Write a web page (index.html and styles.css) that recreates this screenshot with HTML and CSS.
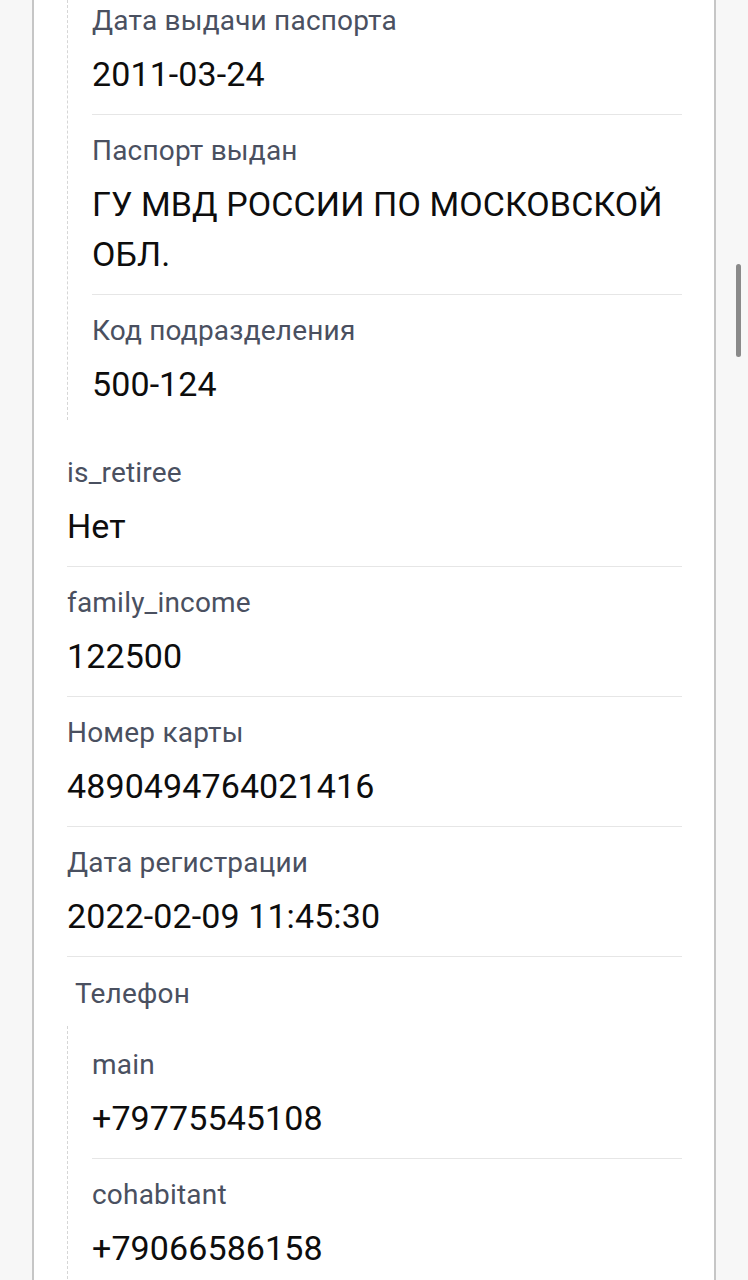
FILE: index.html
```html
<!DOCTYPE html>
<html lang="ru">
<head>
  <meta charset="UTF-8" />
  <meta name="viewport" content="width=device-width, initial-scale=1.0" />
  <title>Клиент</title>
  <link rel="stylesheet" href="styles.css">
</head>
<body>
  <div class="card">
    <!-- Паспорт -->
    <div class="group group-top">
      <div class="row">
        <div class="label">Дата выдачи паспорта</div>
        <div class="value">2011-03-24</div>
      </div>
      <div class="row">
        <div class="label">Паспорт выдан</div>
        <div class="value">ГУ МВД РОССИИ ПО МОСКОВСКОЙ ОБЛ.</div>
      </div>
      <div class="row">
        <div class="label">Код подразделения</div>
        <div class="value">500-124</div>
      </div>
    </div>

    <div class="row">
      <div class="label">is_retiree</div>
      <div class="value">Нет</div>
    </div>
    <div class="row">
      <div class="label">family_income</div>
      <div class="value">122500</div>
    </div>
    <div class="row">
      <div class="label">Номер карты</div>
      <div class="value">4890494764021416</div>
    </div>
    <div class="row">
      <div class="label">Дата регистрации</div>
      <div class="value">2022-02-09 11:45:30</div>
    </div>

    <!-- Телефон -->
    <div class="group-title">Телефон</div>
    <div class="group">
      <div class="row">
        <div class="label">main</div>
        <div class="value">+79775545108</div>
      </div>
      <div class="row">
        <div class="label">cohabitant</div>
        <div class="value">+79066586158</div>
      </div>
    </div>
  </div>

  <div class="scroll-thumb"></div>
</body>
</html>
```

FILE: styles.css
```css
body {
  font-family: Roboto, "Noto Sans", sans-serif;
  background-color: #f7f7f7;
  margin: 0;
  padding: 0;
}

.card {
  background: #fff;
  margin: 0 32px;
  padding: 0 32px 0 33px;
  border-left: 2px solid #c6c6c6;
  border-right: 2px solid #c6c6c6;
  border-bottom: 2px solid #c6c6c6;
}

.row {
  padding: 18px 0 15px;
  border-bottom: 1px solid #e6e6e6;
}

.label {
  font-size: 28px;
  line-height: 36px;
  letter-spacing: 0.2px;
  color: #4a5060;
}

.value {
  margin-top: 10px;
  font-size: 34px;
  line-height: 50px;
  letter-spacing: 0.1px;
  color: #0d0d0d;
}

.group {
  border-left: 1.5px dashed #d6d6d6;
  padding: 3px 0 0 24px;
  margin-bottom: 17px;
}

.group .row:last-child {
  border-bottom: none;
  padding-bottom: 11px;
}

.group-top {
  padding-top: 0;
}

.group-top .row:first-child {
  padding-top: 3px;
}

.group-title {
  font-size: 28px;
  line-height: 36px;
  letter-spacing: 0.2px;
  color: #4a5060;
  padding: 19px 0 14px 8px;
}

.scroll-thumb {
  position: fixed;
  top: 264px;
  right: 7px;
  width: 5px;
  height: 93px;
  border-radius: 3px;
  background: #8a8a8a;
}
```
